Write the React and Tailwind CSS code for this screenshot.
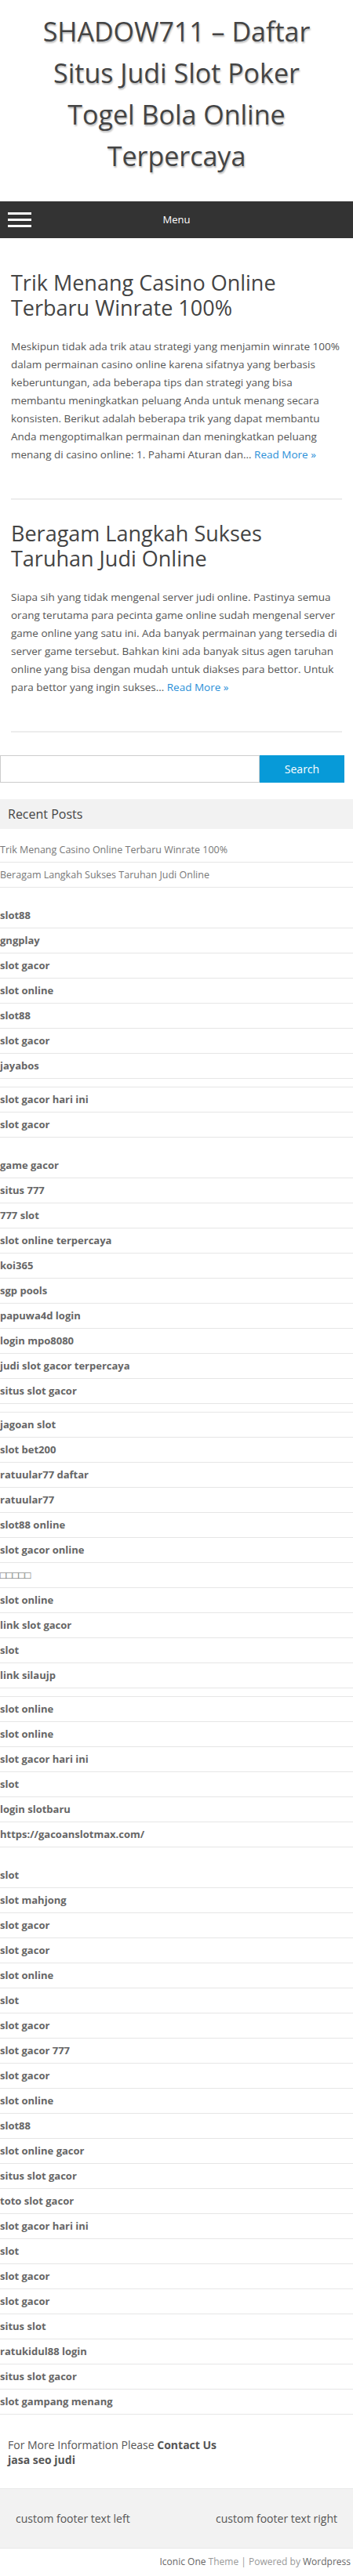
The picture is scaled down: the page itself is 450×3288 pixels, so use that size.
import React from 'react';

const font = { fontFamily: '"Open Sans", "Noto Sans", sans-serif' };

// excerpt lines kept as in the theme's wrapping
const posts = [
  {
    title: ['Trik Menang Casino Online', 'Terbaru Winrate 100%'],
    lines: [
      'Meskipun tidak ada trik atau strategi yang menjamin winrate 100%',
      'dalam permainan casino online karena sifatnya yang berbasis',
      'keberuntungan, ada beberapa tips dan strategi yang bisa',
      'membantu meningkatkan peluang Anda untuk menang secara',
      'konsisten. Berikut adalah beberapa trik yang dapat membantu',
      'Anda mengoptimalkan permainan dan meningkatkan peluang',
      'menang di casino online: 1. Pahami Aturan dan…',
    ],
  },
  {
    title: ['Beragam Langkah Sukses', 'Taruhan Judi Online'],
    lines: [
      'Siapa sih yang tidak mengenal server judi online. Pastinya semua',
      'orang terutama para pecinta game online sudah mengenal server',
      'game online yang satu ini. Ada banyak permainan yang tersedia di',
      'server game tersebut. Bahkan kini ada banyak situs agen taruhan',
      'online yang bisa dengan mudah untuk diakses para bettor. Untuk',
      'para bettor yang ingin sukses…',
    ],
  },
];

// '' = empty list item (thin row)
const widgets = [
  ['slot88', 'gngplay', 'slot gacor', 'slot online', 'slot88', 'slot gacor', 'jayabos', '', 'slot gacor hari ini', 'slot gacor'],
  [
    'game gacor', 'situs 777', '777 slot', 'slot online terpercaya', 'koi365', 'sgp pools', 'papuwa4d login',
    'login mpo8080', 'judi slot gacor terpercaya', 'situs slot gacor', '', 'jagoan slot', 'slot bet200',
    'ratuular77 daftar', 'ratuular77', 'slot88 online', 'slot gacor online', '□□□□□', 'slot online',
    'link slot gacor', 'slot', 'link silaujp', '', 'slot online', 'slot online', 'slot gacor hari ini', 'slot',
    'login slotbaru', 'https://gacoanslotmax.com/',
  ],
  [
    'slot', 'slot mahjong', 'slot gacor', 'slot gacor', 'slot online', 'slot', 'slot gacor', 'slot gacor 777',
    'slot gacor', 'slot online', 'slot88', 'slot online gacor', 'situs slot gacor', 'toto slot gacor',
    'slot gacor hari ini', 'slot', 'slot gacor', 'slot gacor', 'situs slot', 'ratukidul88 login',
    'situs slot gacor', 'slot gampang menang',
  ],
];

function LinkList({ items }) {
  return (
    <ul>
      {items.map((it, i) =>
        it === '' ? (
          <li key={i} className="h-[11px] border-b border-[#e6e6e6]" />
        ) : (
          <li key={i} className="border-b border-[#e6e6e6] py-[5px] text-[13px] leading-[21px] font-bold text-[#666]">
            <a href="#">{it}</a>
          </li>
        )
      )}
    </ul>
  );
}

export default function App() {
  return (
    <div className="w-[450px] bg-white text-[#444]" style={font}>
      {/* site title */}
      <header className="pt-[14px] pb-[31px] text-center">
        <h1 className="text-[34px] leading-[53px] text-[#444] [text-shadow:1px_2px_2px_#bdbdbd]">
          SHADOW711 – Daftar<br />Situs Judi Slot Poker<br />Togel Bola Online<br />Terpercaya
        </h1>
      </header>

      {/* nav */}
      <nav className="h-[47px] bg-[#333] grid grid-cols-[50px_1fr_50px] items-center">
        <div className="pl-[10px] flex flex-col gap-[5px]">
          <span className="block w-[30px] h-[3px] bg-white" />
          <span className="block w-[30px] h-[3px] bg-white" />
          <span className="block w-[30px] h-[3px] bg-white" />
        </div>
        <span className="text-center text-[13px] text-white">Menu</span>
        <span />
      </nav>

      {/* posts */}
      <main className="px-[14px] pt-[41px]">
        {posts.map((p, i) => (
          <article key={i} className={`border-b-2 border-[#ededed] pb-[44px] ${i === 0 ? 'mb-[27px]' : ''}`}>
            <h2 className="text-[27px] leading-[32px] text-[#444]">
              {p.title[0]}<br />{p.title[1]}
            </h2>
            <p className="mt-[22px] text-[13.5px] leading-[23px] text-[#555] whitespace-nowrap">
              {p.lines.map((l, j) => (
                <span key={j} className="block">
                  {l}
                  {j === p.lines.length - 1 && (
                    <> <a href="#" className="text-[#2a8fd8]">Read More »</a></>
                  )}
                </span>
              ))}
            </p>
          </article>
        ))}
      </main>

      {/* sidebar */}
      <aside className="mt-[29px]">
        <form className="flex w-[439px] h-[35px]">
          <input type="text" className="flex-1 min-w-0 border border-[#ccc] bg-white" />
          <button type="button" className="w-[108px] bg-[#079ad8] text-white text-[14px]">Search</button>
        </form>

        <h3 className="mt-[21px] h-[38px] bg-[#f2f2f2] px-[10px] flex items-center text-[16px] text-[#444]">Recent Posts</h3>
        <ul className="mt-[11px]">
          <li className="border-b border-[#e6e6e6] py-[5px] text-[12.5px] leading-[21px] text-[#777]">Trik Menang Casino Online Terbaru Winrate 100%</li>
          <li className="border-b border-[#e6e6e6] py-[5px] text-[12.5px] leading-[21px] text-[#777]">Beragam Langkah Sukses Taruhan Judi Online</li>
        </ul>

        {widgets.map((w, i) => (
          <div key={i} className="mt-[20px]">
            <LinkList items={w} />
          </div>
        ))}

        <div className="mt-[29px] px-[10px] text-[14px] leading-[19px] text-[#555]">
          <p>For More Information Please <b>Contact Us</b></p>
          <p className="font-bold">jasa seo judi</p>
        </div>
      </aside>

      {/* footer */}
      <footer className="mt-[27px]">
        <div className="h-[77px] bg-[#f2f2f2] border-y border-[#e8e8e8] flex items-center justify-between px-[20px] text-[14px] text-[#555]">
          <span>custom footer text left</span>
          <span>custom footer text right</span>
        </div>
        <div className="h-[34px] flex items-center justify-end pr-[3px] text-[12px] text-[#999]">
          <span className="text-[#666]">Iconic One</span>&nbsp;Theme | Powered by&nbsp;<span className="text-[#666]">Wordpress</span>
        </div>
      </footer>
    </div>
  );
}
